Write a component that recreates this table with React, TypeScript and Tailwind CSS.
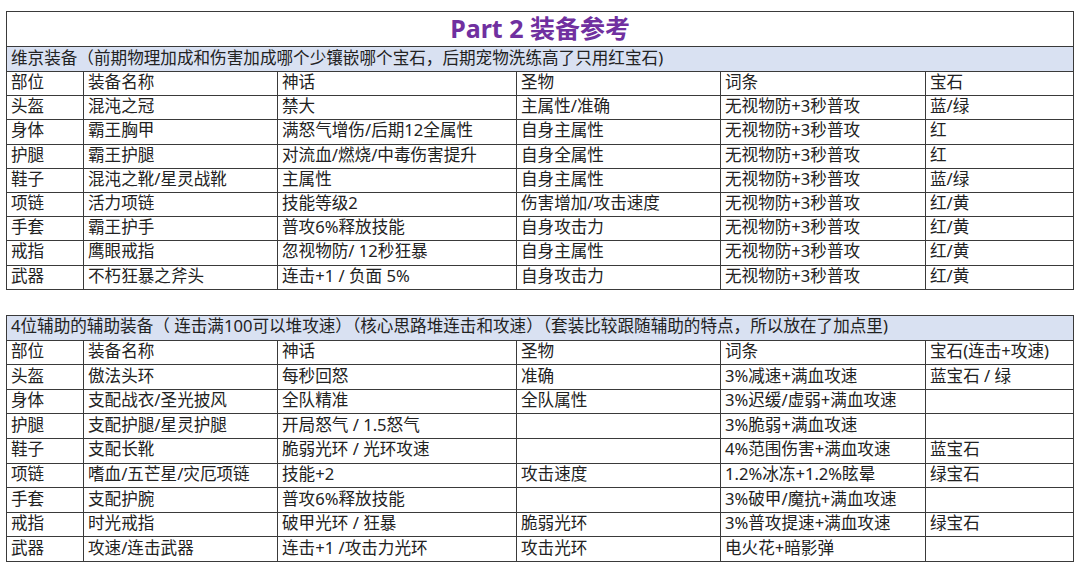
const cols = [77, 194, 239, 204, 205, 148]

const mainRows = [
  ['部位', '装备名称', '神话', '圣物', '词条', '宝石'],
  ['头盔', '混沌之冠', '禁大', '主属性/准确', '无视物防+3秒普攻', '蓝/绿'],
  ['身体', '霸王胸甲', '满怒气增伤/后期12全属性', '自身主属性', '无视物防+3秒普攻', '红'],
  ['护腿', '霸王护腿', '对流血/燃烧/中毒伤害提升', '自身全属性', '无视物防+3秒普攻', '红'],
  ['鞋子', '混沌之靴/星灵战靴', '主属性', '自身主属性', '无视物防+3秒普攻', '蓝/绿'],
  ['项链', '活力项链', '技能等级2', '伤害增加/攻击速度', '无视物防+3秒普攻', '红/黄'],
  ['手套', '霸王护手', '普攻6%释放技能', '自身攻击力', '无视物防+3秒普攻', '红/黄'],
  ['戒指', '鹰眼戒指', '忽视物防/ 12秒狂暴', '自身主属性', '无视物防+3秒普攻', '红/黄'],
  ['武器', '不朽狂暴之斧头', '连击+1 / 负面 5%', '自身攻击力', '无视物防+3秒普攻', '红/黄'],
]

const supportRows = [
  ['部位', '装备名称', '神话', '圣物', '词条', '宝石(连击+攻速)'],
  ['头盔', '傲法头环', '每秒回怒', '准确', '3%减速+满血攻速', '蓝宝石 / 绿'],
  ['身体', '支配战衣/圣光披风', '全队精准', '全队属性', '3%迟缓/虚弱+满血攻速', ''],
  ['护腿', '支配护腿/星灵护腿', '开局怒气 / 1.5怒气', '', '3%脆弱+满血攻速', ''],
  ['鞋子', '支配长靴', '脆弱光环 / 光环攻速', '', '4%范围伤害+满血攻速', '蓝宝石'],
  ['项链', '嗜血/五芒星/灾厄项链', '技能+2', '攻击速度', '1.2%冰冻+1.2%眩晕', '绿宝石'],
  ['手套', '支配护腕', '普攻6%释放技能', '', '3%破甲/魔抗+满血攻速', ''],
  ['戒指', '时光戒指', '破甲光环 / 狂暴', '脆弱光环', '3%普攻提速+满血攻速', '绿宝石'],
  ['武器', '攻速/连击武器', '连击+1 /攻击力光环', '攻击光环', '电火花+暗影弹', ''],
]

function Body({ rows, tall }: { rows: string[][]; tall?: boolean }) {
  return (
    <>
      {rows.map((r, i) => (
        <tr key={i} className={tall ? 'h-[24.6px]' : 'h-[24.2px]'}>
          {r.map((c, j) => (
            <td key={j} className="border border-[#3a3a3a] px-[4px] pt-0 pb-[3px] leading-[20px] whitespace-nowrap">
              {c}
            </td>
          ))}
        </tr>
      ))}
    </>
  )
}

function Cols() {
  return (
    <colgroup>
      {cols.map((w, i) => (
        <col key={i} style={{ width: w }} />
      ))}
    </colgroup>
  )
}

export default function App() {
  return (
    <div
      className="w-[1080px] h-[565px] bg-white text-[#222] text-[16.6px] pt-[11px] pl-[6px] overflow-hidden"
      style={{ fontFamily: '"Noto Sans", "Noto Sans CJK SC", sans-serif' }}
    >
      <table className="table-fixed border-collapse w-[1068px]">
        <Cols />
        <tbody>
          <tr className="h-[35px]">
            <td colSpan={6} className="border border-[#3a3a3a] text-center text-[25px] font-bold text-[#7030a0] leading-[30px] pb-[2px]">
              Part 2 装备参考
            </td>
          </tr>
          <tr className="h-[25px]">
            <td colSpan={6} className="border border-[#3a3a3a] bg-[#d9e1f2] px-[4px] pb-[3px] leading-[20px] whitespace-nowrap">
              维京装备（前期物理加成和伤害加成哪个少镶嵌哪个宝石，后期宠物洗练高了只用红宝石)
            </td>
          </tr>
          <Body rows={mainRows} />
        </tbody>
      </table>

      <table className="table-fixed border-collapse w-[1068px] mt-[25px]">
        <Cols />
        <tbody>
          <tr className="h-[25px]">
            <td colSpan={6} className="border border-[#3a3a3a] bg-[#d9e1f2] px-[4px] pb-[3px] leading-[20px] whitespace-nowrap">
              4位辅助的辅助装备（ 连击满100可以堆攻速）（核心思路堆连击和攻速）（套装比较跟随辅助的特点，所以放在了加点里)
            </td>
          </tr>
          <Body rows={supportRows} tall />
        </tbody>
      </table>
    </div>
  )
}
